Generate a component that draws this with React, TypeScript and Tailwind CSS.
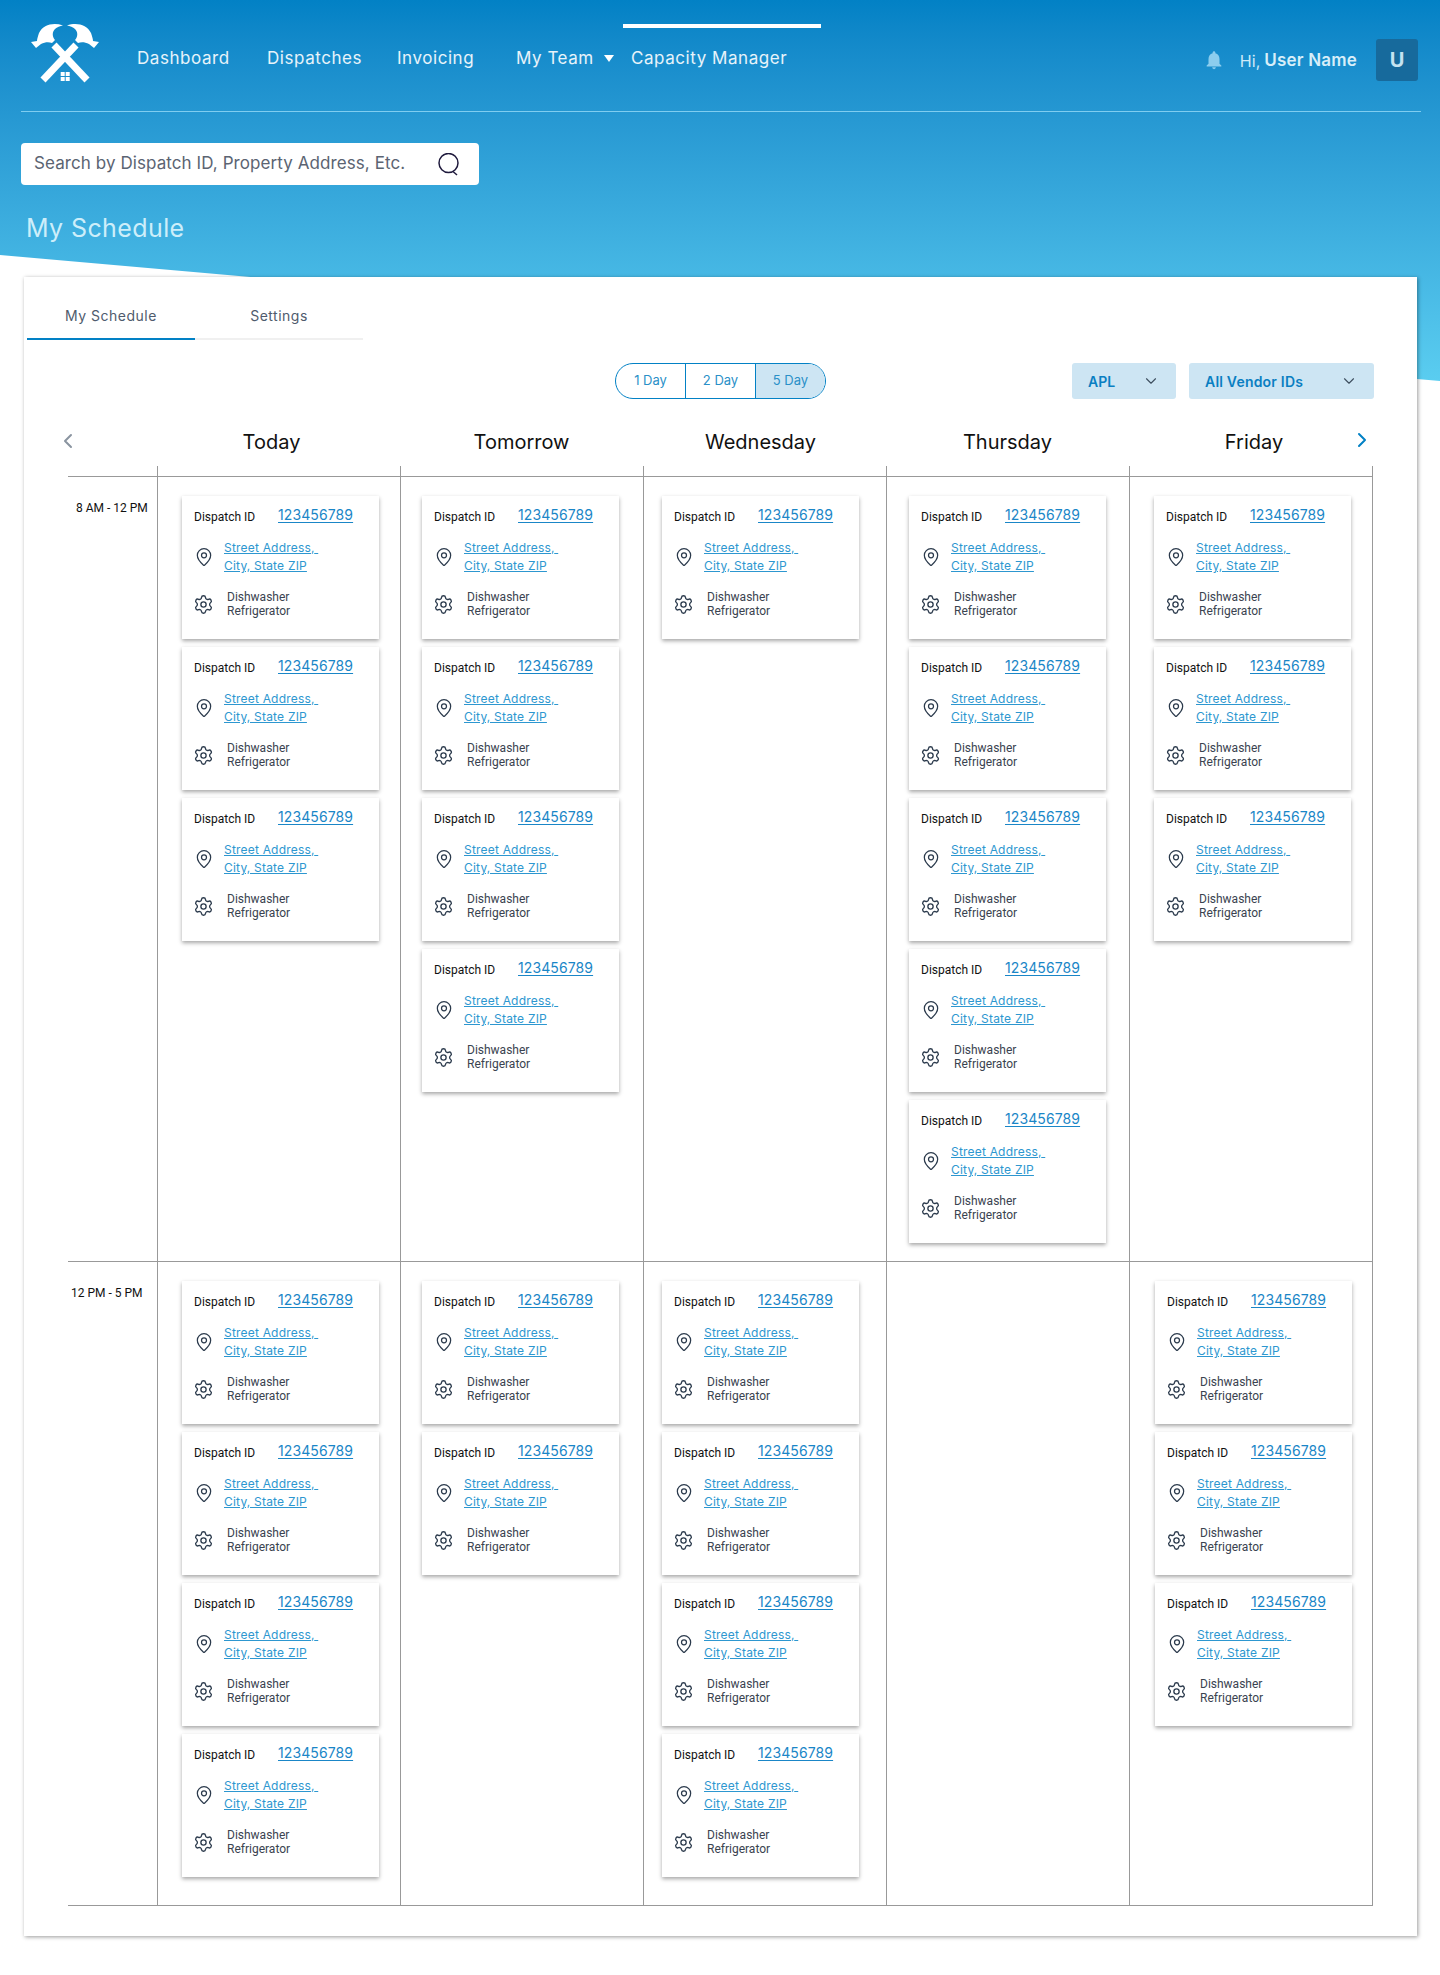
import { ChevronDown, ChevronLeft, ChevronRight, MapPin, Settings } from "lucide-react"
import { MdNotifications } from "react-icons/md"

const days = [
    { name: "Today", className: "pr-[14px]" },
    { name: "Tomorrow", className: "" },
    { name: "Wednesday", className: "pr-[8px]" },
    { name: "Thursday", className: "" },
    { name: "Friday", className: "pl-[6px]" },
]

const slots = [
    {
        label: "8 AM - 12 PM",
        labelClass: "pl-[8px]",
        height: "h-[785px]",
        counts: [3, 4, 1, 5, 3],
        padding: ["pl-[24px]", "pl-[21px]", "pl-[18px]", "pl-[22px]", "pl-[24px]"],
    },
    {
        label: "12 PM - 5 PM",
        labelClass: "pl-[3px]",
        height: "h-[645px] border-b",
        counts: [4, 2, 4, 0, 3],
        padding: ["pl-[24px]", "pl-[21px]", "pl-[18px]", "pl-[22px]", "pl-[25px]"],
    },
]

const gridCols = "grid grid-cols-[89px_repeat(4,243px)_244px]"

function Logo() {
    const head = "M63 25.5C53 22 43 25 39 33C38 36 37 39 37 41L31 42L36 48L41 44C45 42 49 42 52 43L55 40C52 36 52 32 55 29C57 27 60 26 63 25.5Z"
    return (
        <svg viewBox="30 24 70 59" className="w-[70px] h-[59px]" fill="#fff">
            <path d={head} />
            <path d={head} transform="translate(130 0) scale(-1 1)" />
            <path d="M54 45L87 80" stroke="#fff" strokeWidth="7" />
            <path d="M76 45L43 80" stroke="#fff" strokeWidth="7" />
            <rect x="60.7" y="72" width="4" height="4" />
            <rect x="65.7" y="72" width="4" height="4" />
            <rect x="60.7" y="77" width="4" height="4" />
            <rect x="65.7" y="77" width="4" height="4" />
        </svg>
    )
}

function DispatchCard() {
    return (
        <div className="w-[197px] h-[143px] shrink-0 bg-white shadow-[0_2px_4px_rgba(0,0,0,0.35)]">
            <div className="flex items-start pt-[9px] pl-[12px]">
                <span className="w-[84px] mt-[4px] font-['Roboto',sans-serif] text-[12px] leading-[16px] text-[#111]">Dispatch ID</span>
                <a className="text-[14px] leading-[20px] tracking-[0.1px] text-[#1a86c7] underline underline-offset-2">123456789</a>
            </div>
            <div className="flex items-center mt-[14px] pl-[12px]">
                <MapPin size={20} strokeWidth={1.5} className="text-[#2b3a4c]" />
                <a className="ml-[10px] text-[12px] leading-[18px] tracking-[0.2px] text-[#2d97d0] underline">
                    Street Address,{"\u00a0"}
                    <br />
                    City, State ZIP
                </a>
            </div>
            <div className="flex items-center mt-[15px] pl-[11px]">
                <Settings size={21} strokeWidth={1.5} className="text-[#2b3a4c]" />
                <p className="ml-[13px] font-['Roboto',sans-serif] text-[12px] leading-[14px] text-[#3a4350]">
                    Dishwasher
                    <br />
                    Refrigerator
                </p>
            </div>
        </div>
    )
}

export default function App() {
    return (
        <div className="relative h-[1975px] bg-white font-['Inter',sans-serif] overflow-hidden">
            {/* slanted gradient behind the header */}
            <div className="absolute inset-x-0 top-0 h-[381px] bg-linear-to-b from-[#0281c5] to-[#5acdf0] [clip-path:polygon(0_0,100%_0,100%_100%,0_255px)]" />

            <div className="relative">
                {/* Top nav */}
                <header className="flex h-[112px] ml-[21px] mr-[19px] border-b border-[#7fcdf0]">
                    <div className="ml-[9px] mt-[24px] w-[107px]">
                        <Logo />
                    </div>
                    <nav className="flex items-start text-[17px] leading-[24px] tracking-[0.55px] text-white/90">
                        <a className="w-[130px] mt-[46px]">Dashboard</a>
                        <a className="w-[130px] mt-[46px]">Dispatches</a>
                        <a className="w-[119px] mt-[46px]">Invoicing</a>
                        <div className="w-[107px] mt-[46px] flex items-center">
                            <a>My Team</a>
                            <svg viewBox="0 0 10 7" className="w-[10px] h-[7px] ml-[10px]" fill="#fff">
                                <polygon points="0,0 10,0 5,7" />
                            </svg>
                        </div>
                        <a className="w-[198px] mt-[24px] pt-[18px] pl-[8px] border-t-4 border-white">Capacity Manager</a>
                    </nav>
                    <div className="ml-auto flex items-center h-[42px] mt-[39px] mr-[3px]">
                        <MdNotifications size={22} className="text-[#8ccdee]" />
                        <span className="ml-[15px] mt-[2px] text-[16px] text-[#cfeaf8]">Hi,</span>
                        <span className="ml-[4px] mt-[2px] text-[17px] tracking-[0.2px] font-semibold text-[#d7eef9]">User Name</span>
                        <div className="ml-[19px] w-[42px] h-[42px] flex items-center justify-center rounded-[3px] bg-[#176a9c] text-[20px] font-bold text-[#c5e3f1]">U</div>
                    </div>
                </header>

                {/* Search */}
                <div className="ml-[21px] mt-[31px] w-[458px] h-[42px] flex items-center justify-between pl-[13px] pr-[19px] rounded-[4px] bg-white">
                    <span className="text-[17px] tracking-[0.08px] text-[#5b6472]">Search by Dispatch ID, Property Address, Etc.</span>
                    <svg viewBox="0 0 22 23" className="w-[22px] h-[23px]" fill="none" stroke="#1f1a3d" strokeWidth="1.5">
                        <circle cx="10.5" cy="10" r="9.5" />
                        <path d="M15 18.5L19 22" />
                    </svg>
                </div>

                <h1 className="ml-[26px] mt-[26px] text-[25px] leading-[34px] tracking-[0.4px] font-normal text-[#cdeefa]">My Schedule</h1>

                {/* Panel */}
                <main className="ml-[24px] mt-[32px] w-[1393px] h-[1659px] bg-white shadow-[1px_1px_4px_rgba(0,0,0,0.4)]">
                    <div className="flex ml-[3px] w-[336px] border-b-2 border-[#f0f0f0] text-[14px] leading-[20px] tracking-[0.5px] text-[#4f5b6d]">
                        <a className="relative -mb-[2px] w-[168px] h-[63px] pt-[29px] text-center border-b-2 border-[#0281c5]">My Schedule</a>
                        <a className="w-[168px] h-[61px] pt-[29px] text-center">Settings</a>
                    </div>

                    <div className="flex mt-[23px]">
                        <div className="ml-[591px] w-[211px] h-[36px] flex rounded-full border border-[#0281c5] overflow-hidden text-[13px] text-[#2a90c8]">
                            <span className="w-[70px] flex items-center justify-center border-r border-[#0281c5]">1 Day</span>
                            <span className="w-[70px] flex items-center justify-center border-r border-[#0281c5]">2 Day</span>
                            <span className="flex-1 flex items-center justify-center bg-[#cde5f3]">5 Day</span>
                        </div>
                        <div className="ml-[246px] w-[104px] h-[36px] flex items-center justify-between pl-[16px] pr-[16px] rounded-[3px] bg-[#cde5f3] text-[14px] font-semibold text-[#0a7fc2]">
                            APL
                            <ChevronDown size={18} strokeWidth={1.5} className="text-[#3e4f5f]" />
                        </div>
                        <div className="ml-[13px] w-[185px] h-[36px] flex items-center justify-between pl-[16px] pr-[16px] rounded-[3px] bg-[#cde5f3] text-[14px] tracking-[0.2px] font-semibold text-[#0a7fc2]">
                            All Vendor IDs
                            <ChevronDown size={18} strokeWidth={1.5} className="text-[#3e4f5f]" />
                        </div>
                    </div>

                    {/* Week grid */}
                    <div className="ml-[44px] w-[1305px]">
                        <div className={`${gridCols} h-[67px] text-[20px] leading-[28px] text-[#111]`}>
                            <div className="pt-[30px] -ml-[12px]">
                                <ChevronLeft size={24} strokeWidth={2} className="text-[#8a94a0]" />
                            </div>
                            {days.map((day, i) => (
                                <div key={day.name} className={`relative pt-[29px] text-center ${day.className}`}>
                                    {day.name}
                                    {i === 4 && <ChevronRight size={24} strokeWidth={2} className="absolute right-[-1px] top-[29px] text-[#0281c5]" />}
                                </div>
                            ))}
                        </div>
                        <div className={`${gridCols} h-[10px]`}>
                            <div />
                            {days.map((day, i) => (
                                <div key={day.name} className={i === 4 ? "border-x border-[#999]" : "border-l border-[#999]"} />
                            ))}
                        </div>
                        {slots.map((slot) => (
                            <div key={slot.label} className={`${gridCols} ${slot.height} border-t border-[#999]`}>
                                <div className={`pt-[23px] font-['Roboto',sans-serif] text-[12px] leading-[16px] text-[#111] ${slot.labelClass}`}>{slot.label}</div>
                                {slot.counts.map((count, col) => (
                                    <div
                                        key={col}
                                        className={`flex flex-col gap-[8px] pt-[19px] border-l border-[#999] ${slot.padding[col]} ${col === 4 ? "border-r" : ""}`}
                                    >
                                        {Array.from({ length: count }).map((_, i) => (
                                            <DispatchCard key={i} />
                                        ))}
                                    </div>
                                ))}
                            </div>
                        ))}
                    </div>
                </main>
            </div>
        </div>
    )
}
